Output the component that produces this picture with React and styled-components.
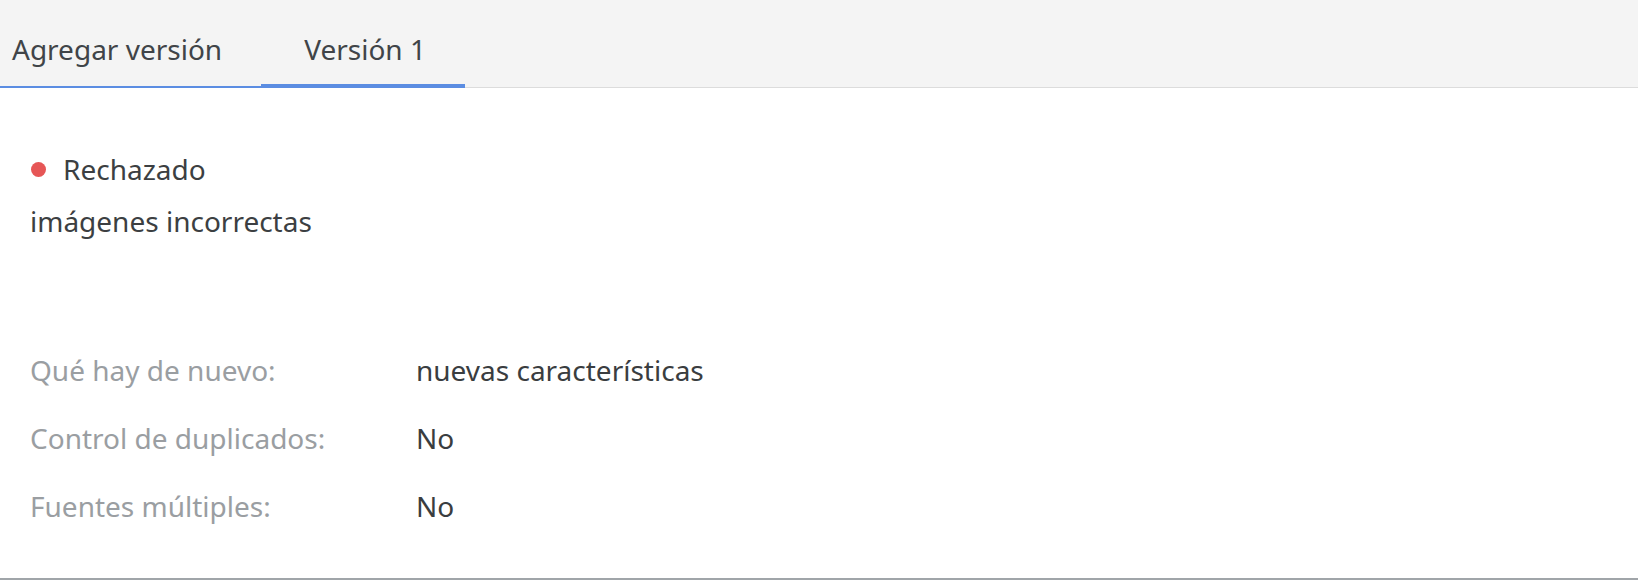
import React from "react";
import styled, { createGlobalStyle } from "styled-components";

const Global = createGlobalStyle`
  html, body { margin: 0; padding: 0; background: #ffffff; }
  * { box-sizing: border-box; }
  body { font-family: "Noto Sans", "Open Sans", sans-serif; }
`;

const Page = styled.div`
  height: 580px;
  display: flex;
  flex-direction: column;
  border-bottom: 2px solid #a0a5a9;
  background: #ffffff;
`;

const TabBar = styled.div`
  display: flex;
  align-items: flex-end;
  height: 88px;
  flex: none;
  background: #f4f4f4;
  border-bottom: 1px solid #dcdcdc;
`;

const Tab = styled.div`
  height: 88px;
  margin-bottom: -1px;
  padding: 31px 39px 0 ${(p) => (p.$first ? "12px" : "43px")};
  font-size: 28px;
  line-height: 36px;
  color: #404448;
  white-space: nowrap;
  border-bottom: ${(p) => (p.$active ? "4px" : "2px")} solid #5b8de2;
  cursor: pointer;
`;

const Content = styled.div`
  padding: 58px 30px 0 30px;
  font-size: 28px;
  color: #3c3f42;
`;

const StatusLine = styled.div`
  display: flex;
  align-items: center;
  gap: 17px;
  line-height: 47px;
  padding-left: 1px;
`;

const Dot = styled.span`
  width: 15px;
  height: 15px;
  border-radius: 50%;
  background: ${(p) => p.$color};
  flex: none;
`;

const Reason = styled.div`
  margin-top: 5px;
  line-height: 47px;
`;

const Details = styled.div`
  margin-top: 91px;
  display: grid;
  grid-template-columns: 386px 1fr;
  grid-auto-rows: 68px;
  line-height: 68px;
`;

const Label = styled.div`
  color: #9a9ea2;
`;

const Value = styled.div`
  color: #3a3d40;
`;

const rows = [
  ["Qué hay de nuevo:", "nuevas características"],
  ["Control de duplicados:", "No"],
  ["Fuentes múltiples:", "No"],
];

export default function App() {
  return (
    <>
      <Global />
      <Page>
        <TabBar>
          <Tab $first>Agregar versión</Tab>
          <Tab $active>Versión 1</Tab>
        </TabBar>
        <Content>
          <StatusLine>
            <Dot $color="#e65656" />
            <span>Rechazado</span>
          </StatusLine>
          <Reason>imágenes incorrectas</Reason>
          <Details>
            {rows.map(([l, v]) => (
              <React.Fragment key={l}>
                <Label>{l}</Label>
                <Value>{v}</Value>
              </React.Fragment>
            ))}
          </Details>
        </Content>
      </Page>
    </>
  );
}
